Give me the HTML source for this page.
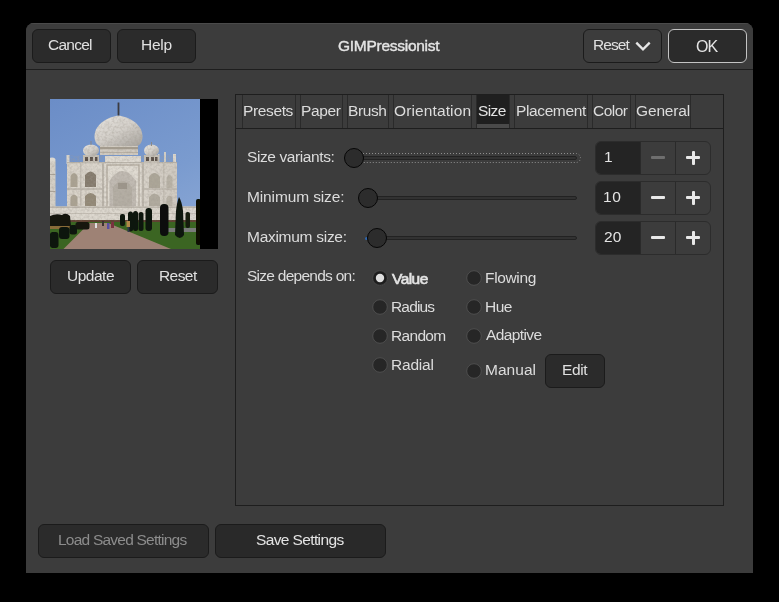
<!DOCTYPE html>
<html><head><meta charset="utf-8">
<style>
*{box-sizing:border-box;margin:0;padding:0}
html,body{width:779px;height:602px;background:#000;overflow:hidden}
body{position:relative;font-family:"Liberation Sans",sans-serif;font-size:15px;color:#dedede;-webkit-font-smoothing:antialiased}
.abs{position:absolute}
#dlg{position:absolute;left:26px;top:23px;width:727px;height:550px;background:#3c3c3c;border-radius:8px 8px 0 0;overflow:hidden}
#hdr{position:absolute;left:0;top:0;width:727px;height:47px;background:#3c3c3c;border-bottom:1px solid #1e1e1e;box-shadow:inset 0 1px 0 #4a4a4a}
.btn{position:absolute;background:#2b2b2b;border:1px solid #1b1b1b;border-radius:6px}
.t{position:absolute;white-space:nowrap;line-height:15px;will-change:transform}
.nb{position:absolute;left:235px;top:94px;width:489px;height:412px;border:1px solid #1e1e1e}
.sep{position:absolute;top:95px;width:1px;height:33px;background:#2a2a2a}
.track{position:absolute;height:4px;background:#323232;border:1px solid #222;border-radius:2px}
.knob{position:absolute;width:20px;height:20px;border-radius:50%;background:#2c2c2c;border:1.7px solid #060606}
.spin{position:absolute;left:595px;width:116px;height:34px;border:1px solid #2c2c2c;border-radius:6px;background:#3c3c3c;overflow:hidden}
.spin .e{position:absolute;left:0;top:0;width:44px;height:32px;background:#242424}
.spin .s1{position:absolute;left:44px;top:0;width:1px;height:32px;background:#2a2a2a}
.spin .s2{position:absolute;left:79px;top:0;width:1px;height:32px;background:#2a2a2a}
.mi{position:absolute;left:55px;top:14px;width:14px;height:3px;background:#e8e8e8;border-radius:1px}
.pl1{position:absolute;left:90px;top:14px;width:14px;height:3px;background:#e8e8e8;border-radius:1px}
.pl2{position:absolute;left:95.5px;top:8.5px;width:3px;height:14px;background:#e8e8e8;border-radius:1px}
.radio{position:absolute;width:15px;height:15px;border-radius:50%;background:#262626;border:1px solid #303030}
</style></head><body>

<div id="dlg"><div id="hdr"></div></div>
<div class="btn" style="left:32px;top:29px;width:79px;height:34px"></div>
<div class="btn" style="left:117px;top:29px;width:79px;height:34px"></div>
<div class="btn" style="left:583px;top:29px;width:79px;height:34px;background:#3c3c3c"></div>
<svg class="abs" style="left:634px;top:39px" width="18" height="14" viewBox="0 0 18 14"><path d="M2.3 3.6 L9 10.3 L15.7 3.6" fill="none" stroke="#e6e6e6" stroke-width="2.3"/></svg>
<div class="btn" style="left:668px;top:29px;width:79px;height:34px;border-color:#c4c4c4"></div>
<svg class="abs" style="left:50px;top:99px" width="168" height="150" viewBox="0 0 168 150">
  <defs>
    <linearGradient id="sky" x1="0" y1="0" x2="0.5" y2="1">
      <stop offset="0" stop-color="#6b8dc7"/><stop offset="0.7" stop-color="#7a9bcf"/><stop offset="1" stop-color="#86a4d3"/>
    </linearGradient>
    <linearGradient id="dome" x1="0" y1="0" x2="0.8" y2="1">
      <stop offset="0" stop-color="#e6e3de"/><stop offset="0.55" stop-color="#d4d0ca"/><stop offset="1" stop-color="#aeaaa4"/>
    </linearGradient>
    <linearGradient id="fac" x1="0" y1="0" x2="1" y2="0">
      <stop offset="0" stop-color="#d8d2c8"/><stop offset="0.5" stop-color="#dcd7ce"/><stop offset="1" stop-color="#cfc9c0"/>
    </linearGradient>
    <filter id="bl" x="-5%" y="-5%" width="110%" height="110%"><feGaussianBlur stdDeviation="0.55"/></filter>
    <filter id="tex" x="0" y="0" width="100%" height="100%" filterUnits="userSpaceOnUse">
      <feTurbulence type="fractalNoise" baseFrequency="0.4" numOctaves="2" seed="7" result="n"/>
      <feColorMatrix in="n" type="matrix" values="0 0 0 0 0.35  0 0 0 0 0.32  0 0 0 0 0.28  1.6 0 0 0 -0.62"/>
    </filter>
    <clipPath id="bld">
      <path d="M68.5 16.5 C77 17.5 92 24 92.5 37 C92.5 42.5 90.5 45.5 87.5 47 L49.5 47 C46.5 45.5 44.5 42.5 44.5 37 C45 24 60 17.5 68.5 16.5 Z"/>
      <rect x="50" y="45" width="38" height="11"/>
      <rect x="17" y="56" width="110" height="53"/>
      <rect x="0" y="62" width="5.5" height="48"/>
      <rect x="0" y="107.5" width="147.5" height="14"/>
      <ellipse cx="41" cy="51.5" rx="8" ry="6"/>
      <ellipse cx="101.5" cy="51.5" rx="7.5" ry="6"/>
    </clipPath>
  </defs>
  <rect x="0" y="0" width="150" height="150" fill="url(#sky)"/>
  <g filter="url(#bl)">
  <!-- left minaret -->
  <rect x="0" y="62" width="5.5" height="48" fill="#d4cfc6"/>
  <rect x="0" y="75" width="5.5" height="1" fill="#a8a298"/>
  <rect x="0" y="92" width="5.5" height="1" fill="#a8a298"/>
  <ellipse cx="2" cy="61" rx="3.5" ry="2.5" fill="#dcd8d0"/>
  <!-- main building -->
  <rect x="17" y="63" width="110" height="46" fill="url(#fac)"/>
  <rect x="16.5" y="56" width="3" height="9" fill="#d8d4cc"/>
  <rect x="123" y="55" width="3" height="10" fill="#d8d4cc"/>
  <rect x="114" y="53" width="2" height="11" fill="#d0ccc4"/>
  <rect x="108" y="55" width="1.5" height="9" fill="#d0ccc4"/>
  <rect x="55" y="57" width="36" height="51" fill="#dfdad1"/>
  <rect x="17" y="63" width="110" height="1.2" fill="#b8b2a8"/>
  <rect x="52" y="63" width="2" height="45" fill="#bcb6ac"/>
  <rect x="92" y="63" width="2" height="45" fill="#bcb6ac"/>
  <rect x="30" y="63" width="1.5" height="45" fill="#c4beb4"/>
  <rect x="113" y="63" width="1.5" height="45" fill="#c4beb4"/>
  <rect x="17" y="89" width="35" height="2" fill="#c2bcb2"/>
  <rect x="94" y="89" width="33" height="2" fill="#c2bcb2"/>
  <!-- side arches -->
  <path d="M35 88 L35 76 Q40.5 69 46 76 L46 88 Z" fill="#847a6c"/>
  <path d="M35 107 L35 97 Q40.5 91 46 97 L46 107 Z" fill="#928876"/>
  <path d="M20.5 88 L20.5 77 Q24 71 27.5 77 L27.5 88 Z" fill="#aaa292"/>
  <path d="M20.5 107 L20.5 98 Q24 93 27.5 98 L27.5 107 Z" fill="#aaa292"/>
  <path d="M99 89 L99 78 Q104.5 70 110 78 L110 89 Z" fill="#aca698"/>
  <path d="M99 107 L99 98 Q104.5 91 110 98 L110 107 Z" fill="#b0aa9e"/>
  <path d="M116.5 89 L116.5 79 Q119.5 73 122.5 79 L122.5 89 Z" fill="#b8b2a6"/>
  <path d="M116.5 107 L116.5 99 Q119.5 94 122.5 99 L122.5 107 Z" fill="#b8b2a6"/>
  <!-- central arch -->
  <rect x="57" y="66" width="32" height="42" fill="none" stroke="#aea698" stroke-width="1.2"/>
  <path d="M59.5 108 L59.5 82 Q72.5 62 86 82 L86 108 Z" fill="#c0bab2"/>
  <path d="M63 108 L63 88 Q72.5 76 82 88 L82 108 Z" fill="#b4aea4"/>
  <rect x="68" y="84" width="9" height="6" fill="#9c958a"/>
  <!-- chhatris -->
  <rect x="33" y="56" width="16" height="8" fill="#c6c0b6"/>
  <rect x="35" y="58" width="3" height="4" fill="#5a5048"/><rect x="40" y="58" width="3" height="4" fill="#5a5048"/><rect x="45" y="58" width="2.5" height="4" fill="#5a5048"/>
  <ellipse cx="41" cy="51.5" rx="8" ry="6" fill="url(#dome)"/>
  <rect x="94" y="56" width="15" height="8" fill="#c6c0b6"/>
  <rect x="96" y="58" width="3" height="4" fill="#5a5048"/><rect x="101" y="58" width="3" height="4" fill="#5a5048"/><rect x="105" y="58" width="2.5" height="4" fill="#5a5048"/>
  <ellipse cx="101.5" cy="51.5" rx="7.5" ry="6" fill="url(#dome)"/>
  <rect x="40.5" y="42" width="1" height="4" fill="#888"/>
  <rect x="101" y="43" width="1" height="4" fill="#888"/>
  <!-- drum -->
  <rect x="50" y="45" width="38" height="11" fill="#d0cac0"/>
  <rect x="50" y="48" width="38" height="2.2" fill="#a49c8e"/>
  <rect x="50" y="53" width="38" height="1" fill="#b8b0a4"/>
  <!-- main dome -->
  <path d="M68.5 16.5 C77 17.5 92 24 92.5 37 C92.5 42.5 90.5 45.5 87.5 47 L49.5 47 C46.5 45.5 44.5 42.5 44.5 37 C45 24 60 17.5 68.5 16.5 Z" fill="url(#dome)"/>
  <rect x="67.6" y="3.5" width="1.8" height="13" fill="#3a3a40"/>
  <!-- plinth -->
  <rect x="0" y="107.5" width="147.5" height="14" fill="#dcd7ce"/>
  <rect x="0" y="107.5" width="147.5" height="1.5" fill="#bcb6ac"/>
  <rect x="0" y="114" width="147.5" height="1" fill="#c4beb4"/>
  <rect x="0" y="121" width="150" height="2.5" fill="#5e4232"/>
  <g clip-path="url(#bld)"><rect x="0" y="0" width="150" height="125" filter="url(#tex)" opacity="0.55"/></g>
  <!-- lawn -->
  <rect x="0" y="123" width="150" height="27" fill="#3a6520"/>
  <!-- pool -->
  <rect x="118" y="129" width="30" height="4" fill="#7a7c7a"/>
  <!-- flower bed -->
  <rect x="0" y="126.5" width="22" height="3.5" fill="#8a6c38"/>
  <!-- path -->
  <path d="M13.5 150 L39.5 124 L58 124 L121 150 Z" fill="#9e8274"/>
  <!-- hedges left -->
  <path d="M0 117 Q6 114 12 116 Q16 113 20 117 L21 127 L0 127 Z" fill="#141410"/>
  <rect x="0" y="133" width="8.5" height="16" rx="3" fill="#0e120c"/>
  <rect x="9" y="128" width="10.5" height="12" rx="3" fill="#10140e"/>
  <rect x="19.5" y="126" width="7.5" height="9.5" rx="2.5" fill="#10140e"/>
  <rect x="25.5" y="123" width="14" height="7.5" rx="2.5" fill="#121610"/>
  <!-- trees right -->
  <rect x="70" y="115" width="5" height="12" rx="2" fill="#0e140c"/>
  <rect x="78" y="112.5" width="5" height="20" rx="2.5" fill="#0c120a"/>
  <rect x="83" y="112" width="5" height="20" rx="2.5" fill="#0c120a"/>
  <rect x="88.5" y="113" width="5" height="19" rx="2.5" fill="#0c120a"/>
  <rect x="95.5" y="109" width="6.5" height="23" rx="3" fill="#0e140c"/>
  <rect x="110" y="105" width="8.5" height="32" rx="4" fill="#0a100a"/>
  <path d="M129 98 Q132 103 133 112 L134 136 Q130 142 125 136 L126 112 Q127 103 129 98 Z" fill="#0e140c"/>
  <rect x="135.5" y="113" width="4.5" height="16" rx="2" fill="#121a10"/>
  <rect x="146" y="100" width="5" height="46" rx="2" fill="#080c06"/>
  <!-- people -->
  <rect x="76.5" y="122" width="3.5" height="6" fill="#b08848"/>
  <rect x="77.5" y="128" width="2" height="5" fill="#303848"/>
  <rect x="61" y="123" width="3" height="6" fill="#7a3040"/>
  <rect x="57" y="124" width="2.5" height="6" fill="#5a50a0"/>
  <rect x="45" y="124" width="2" height="5" fill="#e0e0e0"/>
  <rect x="52" y="122" width="2" height="5" fill="#3a3030"/>
  </g>
  <rect x="0" y="0" width="150" height="150" fill="#000" opacity="0" />
  <rect x="150" y="0" width="18" height="150" fill="#000"/>
</svg>

<div class="btn" style="left:50px;top:260px;width:81px;height:34px"></div>
<div class="btn" style="left:137px;top:260px;width:81px;height:34px"></div>
<div class="nb"></div>
<div class="abs" style="left:236px;top:128px;width:487px;height:1px;background:#1e1e1e"></div>
<div class="abs" style="left:477px;top:95px;width:32px;height:29px;background:#1f1f1f"></div>
<div class="abs" style="left:477px;top:124px;width:32px;height:4px;background:#4a4a4a"></div>
<div class="sep" style="left:242px"></div>
<div class="sep" style="left:295px"></div><div class="sep" style="left:300px"></div>
<div class="sep" style="left:342px"></div><div class="sep" style="left:347px"></div>
<div class="sep" style="left:388px"></div><div class="sep" style="left:393px"></div>
<div class="sep" style="left:471px"></div><div class="sep" style="left:476px"></div>
<div class="sep" style="left:509px"></div><div class="sep" style="left:514px"></div>
<div class="sep" style="left:587px"></div><div class="sep" style="left:592px"></div>
<div class="sep" style="left:630px"></div><div class="sep" style="left:635px"></div>
<div class="sep" style="left:690px"></div>
<svg class="abs" style="left:351px;top:152px" width="231" height="12"><rect x="1.5" y="1.5" width="228" height="9" rx="4.5" fill="none" stroke="#8e8e8e" stroke-width="1" stroke-dasharray="1 2"/></svg>
<div class="track" style="left:354px;top:156px;width:223px"></div>
<div class="knob" style="left:344px;top:148px"></div>
<div class="track" style="left:368px;top:196px;width:209px"></div>
<div class="knob" style="left:358px;top:188px"></div>
<div class="track" style="left:366px;top:236px;width:211px"></div>
<div class="abs" style="left:365px;top:236.5px;width:3px;height:3px;border-radius:1.5px;background:#2f66ae"></div>
<div class="knob" style="left:367px;top:228px"></div>
<div class="spin" style="top:141px"><div class="e"></div><div class="s1"></div><div class="s2"></div><div class="mi" style="background:#6e6e6e"></div><div class="pl1"></div><div class="pl2"></div></div>
<div class="spin" style="top:181px"><div class="e"></div><div class="s1"></div><div class="s2"></div><div class="mi"></div><div class="pl1"></div><div class="pl2"></div></div>
<div class="spin" style="top:221px"><div class="e"></div><div class="s1"></div><div class="s2"></div><div class="mi"></div><div class="pl1"></div><div class="pl2"></div></div>
<svg class="abs" style="left:370px;top:268px" width="20" height="20"><circle cx="10" cy="10" r="7.6" fill="none" stroke="#4e4e4e" stroke-width="0.8" stroke-dasharray="1 1.2"/><circle cx="10" cy="10" r="6.8" fill="#1d1d1d"/><circle cx="10" cy="10" r="4.2" fill="#dedede"/></svg>
<svg class="abs" style="left:370px;top:297px" width="20" height="20"><circle cx="10" cy="10" r="7.3" fill="#262626" stroke="#4e4e4e" stroke-width="1"/></svg>
<svg class="abs" style="left:370px;top:326px" width="20" height="20"><circle cx="10" cy="10" r="7.3" fill="#262626" stroke="#4e4e4e" stroke-width="1"/></svg>
<svg class="abs" style="left:370px;top:355px" width="20" height="20"><circle cx="10" cy="10" r="7.3" fill="#262626" stroke="#4e4e4e" stroke-width="1"/></svg>
<svg class="abs" style="left:463.6px;top:268.4px" width="20" height="20"><circle cx="10" cy="10" r="7.3" fill="#262626" stroke="#4e4e4e" stroke-width="1"/></svg>
<svg class="abs" style="left:463.6px;top:297.1px" width="20" height="20"><circle cx="10" cy="10" r="7.3" fill="#262626" stroke="#4e4e4e" stroke-width="1"/></svg>
<svg class="abs" style="left:463.6px;top:326px" width="20" height="20"><circle cx="10" cy="10" r="7.3" fill="#262626" stroke="#4e4e4e" stroke-width="1"/></svg>
<svg class="abs" style="left:463.6px;top:361.2px" width="20" height="20"><circle cx="10" cy="10" r="7.3" fill="#262626" stroke="#4e4e4e" stroke-width="1"/></svg>
<div class="btn" style="left:545px;top:354px;width:60px;height:34px"></div>
<div class="btn" style="left:38px;top:524px;width:171px;height:34px"></div>
<div class="btn" style="left:215px;top:524px;width:171px;height:34px;background:#292929"></div>
<div class="t" id="cancel" style="left:48.00px;top:36.60px;letter-spacing:-0.740px;font-size:15.5px;color:#e0e0e0">Cancel</div>
<div class="t" id="help" style="left:141.00px;top:36.60px;letter-spacing:-0.233px;font-size:15.5px;color:#e0e0e0">Help</div>
<div class="t" id="title" style="left:338.40px;top:38.20px;letter-spacing:-0.269px;font-size:15.5px;color:#e4e4e4;-webkit-text-stroke:0.4px #e4e4e4">GIMPressionist</div>
<div class="t" id="reseth" style="left:592.50px;top:36.60px;letter-spacing:-0.938px;font-size:15.5px;color:#e0e0e0">Reset</div>
<div class="t" id="ok" style="left:696.20px;top:38.90px;letter-spacing:-1.000px;font-size:16px;color:#e4e4e4">OK</div>
<div class="t" id="update" style="left:66.50px;top:268.10px;letter-spacing:-0.490px;font-size:15.5px;color:#e0e0e0">Update</div>
<div class="t" id="resetp" style="left:158.50px;top:267.60px;letter-spacing:-0.575px;font-size:15.5px;color:#e0e0e0">Reset</div>
<div class="t" id="t1" style="left:242.50px;top:102.60px;letter-spacing:-0.367px;font-size:15.5px;color:#dcdcdc">Presets</div>
<div class="t" id="t2" style="left:300.50px;top:102.60px;letter-spacing:-0.362px;font-size:15.5px;color:#dcdcdc">Paper</div>
<div class="t" id="t3" style="left:347.50px;top:102.60px;letter-spacing:-0.388px;font-size:15.5px;color:#dcdcdc">Brush</div>
<div class="t" id="t4" style="left:393.50px;top:102.60px;letter-spacing:0.120px;font-size:15.5px;color:#dcdcdc">Orientation</div>
<div class="t" id="t5" style="left:477.50px;top:102.60px;letter-spacing:-0.600px;font-size:15.5px;color:#e4e4e4">Size</div>
<div class="t" id="t6" style="left:516.00px;top:102.60px;letter-spacing:-0.381px;font-size:15.5px;color:#dcdcdc">Placement</div>
<div class="t" id="t7" style="left:592.50px;top:102.60px;letter-spacing:-0.538px;font-size:15.5px;color:#dcdcdc">Color</div>
<div class="t" id="t8" style="left:636.00px;top:102.60px;letter-spacing:-0.142px;font-size:15.5px;color:#dcdcdc">General</div>
<div class="t" id="l1" style="left:247.00px;top:149.10px;letter-spacing:-0.400px;font-size:15.5px;color:#dcdcdc">Size variants:</div>
<div class="t" id="l2" style="left:247.00px;top:188.60px;letter-spacing:-0.129px;font-size:15.5px;color:#dcdcdc">Minimum size:</div>
<div class="t" id="l3" style="left:247.00px;top:228.60px;letter-spacing:-0.279px;font-size:15.5px;color:#dcdcdc">Maximum size:</div>
<div class="t" id="l4" style="left:246.50px;top:267.60px;letter-spacing:-0.737px;font-size:15.5px;color:#dcdcdc">Size depends on:</div>
<div class="t" id="r1" style="left:391.60px;top:270.60px;letter-spacing:-0.550px;font-size:15.5px;color:#e4e4e4;-webkit-text-stroke:0.65px #e4e4e4">Value</div>
<div class="t" id="r2" style="left:390.50px;top:299.10px;letter-spacing:-0.830px;font-size:15.5px;color:#dcdcdc">Radius</div>
<div class="t" id="r3" style="left:390.50px;top:328.10px;letter-spacing:-0.670px;font-size:15.5px;color:#dcdcdc">Random</div>
<div class="t" id="r4" style="left:390.50px;top:357.10px;letter-spacing:-0.190px;font-size:15.5px;color:#dcdcdc">Radial</div>
<div class="t" id="r5" style="left:484.50px;top:269.60px;letter-spacing:-0.342px;font-size:15.5px;color:#dcdcdc">Flowing</div>
<div class="t" id="r6" style="left:484.50px;top:298.60px;letter-spacing:-0.500px;font-size:15.5px;color:#dcdcdc">Hue</div>
<div class="t" id="r7" style="left:485.50px;top:326.60px;letter-spacing:-0.600px;font-size:15.5px;color:#dcdcdc">Adaptive</div>
<div class="t" id="r8" style="left:484.50px;top:361.60px;letter-spacing:0.040px;font-size:15.5px;color:#dcdcdc">Manual</div>
<div class="t" id="edit" style="left:562.00px;top:361.60px;letter-spacing:-0.350px;font-size:15.5px;color:#e0e0e0">Edit</div>
<div class="t" id="load" style="left:58.00px;top:531.60px;letter-spacing:-0.772px;font-size:15.5px;color:#8c8c8c">Load Saved Settings</div>
<div class="t" id="save" style="left:256.00px;top:531.60px;letter-spacing:-0.621px;font-size:15.5px;color:#e4e4e4">Save Settings</div>
<div class="t" id="n1" style="left:603.50px;top:148.60px;letter-spacing:0.000px;font-size:15.5px;color:#e4e4e4">1</div>
<div class="t" id="n2" style="left:603.00px;top:188.60px;letter-spacing:0.600px;font-size:15.5px;color:#e4e4e4">10</div>
<div class="t" id="n3" style="left:604.00px;top:228.60px;letter-spacing:0.100px;font-size:15.5px;color:#e4e4e4">20</div>
</body></html>
